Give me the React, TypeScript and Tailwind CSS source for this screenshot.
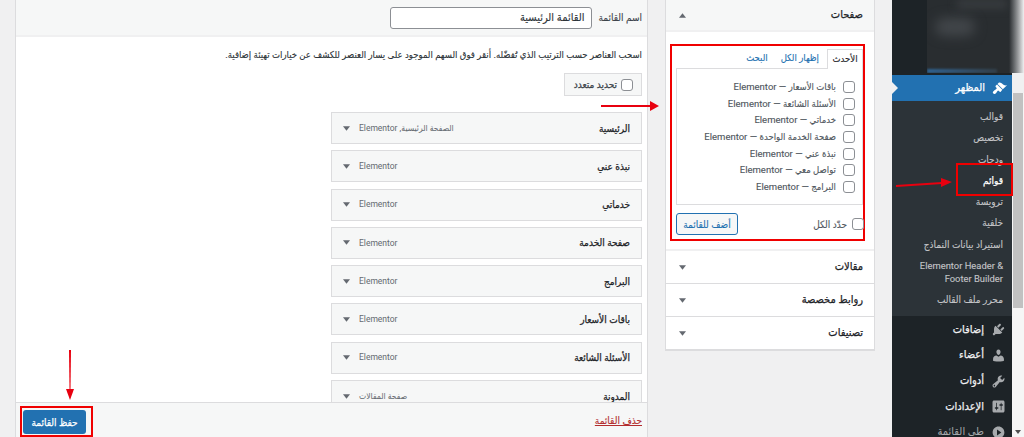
const font = "font-['Roboto','DejaVu_Sans_Condensed','DejaVu_Sans',sans-serif]";
const medium = '[-webkit-text-stroke:0.25px_currentColor]';
const soft = '[-webkit-text-stroke:0.12px_currentColor]';

function Caret({ up = false, className = '' }: { up?: boolean; className?: string }) {
  return (
    <svg viewBox="0 0 8 5" className={`w-[7px] h-[5px] shrink-0 ${className}`} fill="#646970">
      <path d={up ? 'M4 0l4 5H0z' : 'M0 0h8L4 5z'} />
    </svg>
  );
}

function Check({ className = '' }: { className?: string }) {
  return (
    <span
      className={`block w-3 h-3 shrink-0 rounded-[3px] border border-[#8c8f94] bg-white ${className}`}
    />
  );
}

const menuItems = [
  { title: 'الرئيسية', type: 'الصفحة الرئيسية, Elementor' },
  { title: 'نبذة عني', type: 'Elementor' },
  { title: 'خدماتي', type: 'Elementor' },
  { title: 'صفحة الخدمة', type: 'Elementor' },
  { title: 'البرامج', type: 'Elementor' },
  { title: 'باقات الأسعار', type: 'Elementor' },
  { title: 'الأسئلة الشائعة', type: 'Elementor' },
  { title: 'المدونة', type: 'صفحة المقالات' },
];

const pages = [
  'باقات الأسعار — Elementor',
  'الأسئلة الشائعة — Elementor',
  'خدماتي — Elementor',
  'صفحة الخدمة الواحدة — Elementor',
  'نبذة عني — Elementor',
  'تواصل معي — Elementor',
  'البرامج — Elementor',
];

const subMenu = [
  { label: 'قوالب' },
  { label: 'تخصيص' },
  { label: 'ودجات' },
  { label: 'قوائم', active: true },
  { label: 'ترويسة' },
  { label: 'خلفية' },
  { label: 'استيراد بيانات النماذج' },
  { label: 'Elementor Header & Footer Builder', wide: true },
  { label: 'محرر ملف القالب' },
];

const icons = {
  brush:
    'M14.48 11.06L7.41 3.99l1.5-1.5c.5-.56 2.3-.47 3.51.32 1.21.8 1.43 1.28 2.91 2.1 1.18.64 2.45 1.26 4.67.85zm-.71.71L6.7 4.7 4.93 6.47c-.39.39-.39 1.02 0 1.41l1.06 1.06c.39.39.39 1.03 0 1.42-.6.6-1.43 1.11-2.21 1.69-.35.26-.7.53-1.01.84C1.43 13.71.96 14.56 1.1 15.4c.08.47.31.91.66 1.27l.03.03c.39.39.87.63 1.34.71.84.14 1.69-.33 2.05-1.04.31-.31.58-.67.84-1.01.58-.78 1.09-1.61 1.69-2.21.39-.39 1.03-.39 1.42 0l1.06 1.06c.39.39 1.02.39 1.41 0z',
  plugin:
    'M13.11 4.36L9.87 7.6 8 5.73l3.24-3.24c.35-.34 1.05-.2 1.56.32.52.51.66 1.21.31 1.55zm-8 1.77l.91-1.12 9.01 9.01-1.19.84c-.71.71-2.63 1.16-3.82 1.16H6.14L4.9 17.26c-.59.59-1.54.59-2.12 0-.59-.58-.59-1.53 0-2.12l1.24-1.24v-3.88c0-1.13.4-3.19 1.09-3.89zm7.26 3.97l3.24-3.24c.34-.35 1.04-.21 1.55.31.52.51.66 1.21.31 1.55l-3.24 3.25z',
  users:
    'M10 9.25c-2.27 0-2.73-3.44-2.73-3.44C7 4.02 7.82 2 9.97 2c2.16 0 2.98 2.02 2.71 3.81 0 0-.41 3.44-2.68 3.44zm0 2.57L12.72 10c2.39 0 4.52 2.33 4.52 4.53v2.49s-3.65 1.13-7.24 1.13c-3.65 0-7.24-1.13-7.24-1.13v-2.49c0-2.25 1.94-4.48 4.47-4.48z',
  tools:
    'M16.68 9.77c-1.34 1.34-3.3 1.67-4.95.99l-5.41 6.52c-.99.99-2.59.99-3.58 0s-.99-2.59 0-3.57l6.52-5.42c-.68-1.65-.35-3.61.99-4.95 1.28-1.28 3.12-1.62 4.72-1.06l-2.89 2.89 2.82 2.82 2.86-2.87c.53 1.58.18 3.39-1.08 4.65zM3.81 16.21c.4.39 1.04.39 1.43 0 .4-.4.4-1.04 0-1.43-.39-.4-1.03-.4-1.43 0-.39.39-.39 1.03 0 1.43z',
  settings:
    'M18 16V4c0-1.1-.9-2-2-2H4c-1.1 0-2 .9-2 2v12c0 1.1.9 2 2 2h12c1.1 0 2-.9 2-2zM8 11h1c.55 0 1 .45 1 1s-.45 1-1 1H8v1.5c0 .28-.22.5-.5.5s-.5-.22-.5-.5V13H6c-.55 0-1-.45-1-1s.45-1 1-1h1V5.5c0-.28.22-.5.5-.5s.5.22.5.5V11zm5-2h-1c-.55 0-1-.45-1-1s.45-1 1-1h1V5.5c0-.28.22-.5.5-.5s.5.22.5.5V7h1c.55 0 1 .45 1 1s-.45 1-1 1h-1v5.5c0 .28-.22.5-.5.5s-.5-.22-.5-.5V9z',
  collapse:
    'M10 2.16c4.33 0 7.84 3.51 7.84 7.84s-3.51 7.84-7.84 7.84S2.16 14.33 2.16 10 5.67 2.16 10 2.16zM8 13.88V6.12L13.82 9.97z',
};

function WpIcon({ d, fill = '#a7aaad' }: { d: string; fill?: string }) {
  return (
    <svg viewBox="0 0 20 20" className="w-[15px] h-[15px] shrink-0" fill={fill} fillRule="evenodd">
      <path d={d} />
    </svg>
  );
}

const mainItems = [
  { label: 'إضافات', icon: icons.plugin },
  { label: 'أعضاء', icon: icons.users },
  { label: 'أدوات', icon: icons.tools },
  { label: 'الإعدادات', icon: icons.settings },
];

function AccordionRow({ label }: { label: string }) {
  return (
    <div className={`h-[33px] flex items-center justify-between pr-[11px] pl-[13px] border-b border-[#dcdcde] text-[11px] text-[#1d2327] ${medium}`}>
      <span>{label}</span>
      <Caret />
    </div>
  );
}

export default function App() {
  return (
    <div
      dir="rtl"
      className={`relative flex w-[1024px] h-[437px] overflow-hidden bg-[#f0f0f1] ${font}`}
    >
      {/* scrollbar */}
      <div className="w-3 shrink-0 h-full flex flex-col items-center bg-[#f6f6f6]">
        <div className="mt-[93px] w-[10px] h-[215px] bg-[#c1c1c1]" />
        <div className="mt-auto mb-[3px] w-0 h-0 border-x-[3px] border-x-transparent border-t-[4px] border-t-[#505050]" />
      </div>

      {/* admin menu */}
      <aside className="w-[120px] shrink-0 h-full flex flex-col bg-[#1d2327]">
        <div className="h-[75px] shrink-0" />
        <div className={`relative h-[26px] shrink-0 flex items-center gap-[7px] pr-[5px] bg-[#2271b1] text-white text-[11px] ${medium}`}>
          <WpIcon d={icons.brush} fill="#ffffff" />
          <span>المظهر</span>
          <span className="absolute left-0 top-[7px] w-0 h-0 border-y-[6px] border-y-transparent border-l-[6px] border-l-[#f0f0f1]" />
        </div>
        <ul className={`h-[215px] shrink-0 pt-[5px] pr-[9px] bg-[#2c3338] text-[10px] text-[#c3c4c7] ${soft}`}>
          {subMenu.map((item) => (
            <li
              key={item.label}
              className={`${item.wide ? 'h-[34px] leading-[13px] pt-[4px] text-[9.4px]' : 'h-[21.3px] leading-[21.3px]'} ${item.active ? `text-white ${medium}` : ''}`}
            >
              {item.label}
            </li>
          ))}
        </ul>
        <ul className={`pt-[1px] text-[11px] text-[#f0f0f1] ${medium}`}>
          {mainItems.map((item) => (
            <li key={item.label} className="h-[25.7px] flex items-center gap-[7px] pr-[6px]">
              <WpIcon d={item.icon} />
              <span>{item.label}</span>
            </li>
          ))}
          <li className="h-[25.7px] flex items-center gap-[7px] pr-[6px] [-webkit-text-stroke:0] text-[#a7aaad]">
            <WpIcon d={icons.collapse} />
            <span>طي القائمة</span>
          </li>
        </ul>
      </aside>

      {/* accordion */}
      <section className="w-[210px] shrink-0 mr-[17px] self-start bg-white border-x border-b border-[#dcdcde]">
        <div className={`h-[32px] flex items-center justify-between pr-[11px] pl-[13px] bg-[#f6f7f7] border-b-2 border-[#f0f0f1] text-[11px] text-[#1d2327] ${medium}`}>
          <span>صفحات</span>
          <Caret up />
        </div>
        <div className="pr-[9px] pl-[4px] pt-3 pb-2 border-b-2 border-[#f0f0f1]">
          <div className="h-[197px] border-2 border-[#f00000] pt-[2px] pl-[4px]">
            <div className={`flex h-[20px] items-stretch text-[9.5px] text-[#2271b1] ${soft}`}>
              <span className="w-[36px] flex items-center justify-center border border-b-0 border-[#dcdcde] bg-white text-[#1d2327] relative top-px">
                الأحدث
              </span>
              <span className="mr-[8px] flex items-center">إظهار الكل</span>
              <span className="mr-[13px] flex items-center">البحث</span>
            </div>
            <div className={`h-[137px] border border-[#dcdcde] pt-[10px] pr-[7px] text-[9.5px] text-[#50575e] ${soft}`}>
              {pages.map((page) => (
                <label key={page} className="h-[16.6px] flex items-center gap-[7px]">
                  <Check />
                  <span>{page}</span>
                </label>
              ))}
            </div>
            <div className="mt-[8px] flex items-center justify-between">
              <label className={`flex items-center gap-[5px] -mr-[1px] text-[10px] text-[#50575e] ${soft}`}>
                <Check />
                <span>حدّد الكل</span>
              </label>
              <button className={`w-[62px] h-[22px] rounded-[3px] border border-[#2271b1] bg-[#f6f7f7] text-[10px] text-[#2271b1] ${soft}`}>
                أضف للقائمة
              </button>
            </div>
          </div>
        </div>
        <AccordionRow label="مقالات" />
        <AccordionRow label="روابط مخصصة" />
        <AccordionRow label="تصنيفات" />
      </section>

      {/* menu editor */}
      <main className="w-[633px] shrink-0 mr-[17px] h-full flex flex-col bg-white border-x border-[#dcdcde]">
        <div className={`h-[37px] shrink-0 flex items-start gap-[6px] pt-[7px] pr-[5px] bg-[#f6f7f7] border-b-2 border-[#f0f0f1] ${soft}`}>
          <span className="leading-[22px] text-[10px] text-[#3c434a]">اسم القائمة</span>
          <div className="w-[202px] h-[22px] flex items-center pr-[7px] rounded-[3px] bg-white border border-[#8c8f94] text-[11px] text-[#2c3338]">
            القائمة الرئيسية
          </div>
        </div>
        <div className="flex-1 min-h-0 overflow-hidden pr-[5px]">
          <p className={`mt-[10px] leading-[16px] text-[9.5px] text-[#2c3338] ${soft}`}>
            اسحب العناصر حسب الترتيب الذي تُفضّله. أنقر فوق السهم الموجود على يسار العنصر للكشف عن خيارات تهيئة إضافية.
          </p>
          <div className={`mt-[10px] w-[78px] h-[23px] flex items-center gap-[4px] pr-[8px] bg-[#f6f7f7] border border-[#dcdcde] whitespace-nowrap text-[10px] text-[#3c434a] ${medium}`}>
            <Check />
            <span>تحديد متعدد</span>
          </div>
          <ul className="mt-[16px] w-[311px] flex flex-col gap-[6.3px]">
            {menuItems.map((item) => (
              <li
                key={item.title}
                className="h-[32px] shrink-0 flex items-center justify-between px-[11px] bg-[#f6f7f7] border border-[#dcdcde]"
              >
                <span className={`text-[10px] text-[#1d2327] ${medium}`}>{item.title}</span>
                <span className="flex items-center gap-[9px] text-[8.5px] text-[#646970]">
                  <span>{item.type}</span>
                  <Caret />
                </span>
              </li>
            ))}
          </ul>
        </div>
        <div className="h-[35px] shrink-0 flex items-center justify-between pr-[5px] pl-[7px] bg-[#f6f7f7] border-t border-[#dcdcde]">
          <span className={`mt-[1px] text-[10px] text-[#b32d2e] underline ${soft}`}>حذف القائمة</span>
          <button className={`mt-[4px] w-[63px] h-[24px] rounded-[3px] bg-[#2271b1] text-[10px] text-white ${medium}`}>
            حفظ القائمة
          </button>
        </div>
      </main>

      {/* blurred strip at the top of the admin menu */}
      <div className="absolute left-[927px] top-0 w-[97px] h-[73px] overflow-hidden bg-[#292d30]">
        <div className="absolute left-[8px] top-[18px] w-[40px] h-[18px] rounded-full bg-[#42464a] blur-[6px]" />
        <div className="absolute left-[30px] top-0 w-[50px] h-[8px] bg-[#3a3e41] blur-[4px]" />
        <div className="absolute left-0 bottom-0 w-[70px] h-[4px] bg-gradient-to-r from-[#2f6494] to-[#33404a] blur-[1px]" />
        <div className="absolute right-0 top-0 w-[15px] h-full bg-gradient-to-r from-[#292d30] to-[#f0f0f1]" />
      </div>
      <div className="absolute left-[1012px] top-[73px] w-3 h-[20px] bg-[#f0f0f1]" />

      {/* annotations */}
      <div className="absolute left-[956px] top-[163px] w-[57px] h-[33px] border-2 border-[#f00000]" />
      <div className="absolute left-[20px] top-[406px] w-[73px] h-[31px] border-2 border-[#f00000]" />
      <svg className="absolute left-0 top-0 pointer-events-none" width="1024" height="437" fill="#e8000f">
        <path d="M601 105h50v2h-50z" />
        <path d="M650 101l9 5-9 5z" />
        <path d="M896 187l46-3v-2l-46 3z" />
        <path d="M941 178l11 4-11 5z" />
        <path d="M69 350h2l-.5 40h-1z" />
        <path d="M66 389h8l-4 11z" />
      </svg>
    </div>
  );
}
